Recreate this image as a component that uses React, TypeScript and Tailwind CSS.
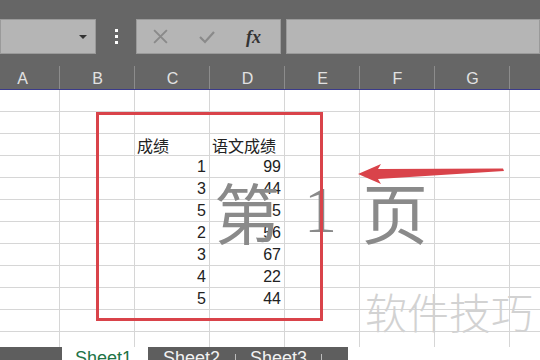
import React from "react";

const cols = ["A", "B", "C", "D", "E", "F", "G", "H"];
const data: [string, string][] = [
  ["1", "99"],
  ["3", "44"],
  ["5", "5"],
  ["2", "56"],
  ["3", "67"],
  ["4", "22"],
  ["5", "44"],
];

const sans = { fontFamily: '"Liberation Sans", "Noto Sans CJK SC", sans-serif' };
const cjk = { fontFamily: '"Noto Sans CJK SC", "Liberation Sans", sans-serif' };

function cellContent(r: number, c: number) {
  if (r === 2 && c === 2) return <span className="pl-[2px]" style={cjk}>成绩</span>;
  if (r === 2 && c === 3) return <span className="pl-[2px]" style={cjk}>语文成绩</span>;
  if (r >= 3 && r <= 9 && (c === 2 || c === 3)) {
    const v = data[r - 3][c - 2];
    return <span className="ml-auto pr-[3px]">{v}</span>;
  }
  return null;
}

export default function App() {
  return (
    <div className="relative w-[540px] h-[360px] overflow-hidden bg-white" style={sans}>
      {/* toolbar */}
      <div className="h-[64px] bg-[#666666] pt-[19px] flex items-start">
        <div className="w-[96px] h-[35px] bg-[#b5b5b5] border border-[#9a9a9a] flex items-center justify-end pr-[8px]">
          <div className="w-0 h-0 border-l-[4px] border-r-[4px] border-t-[4px] border-l-transparent border-r-transparent border-t-[#333333]" />
        </div>
        <div className="w-[40px] h-[35px] flex flex-col items-center justify-center gap-[3px]">
          <div className="w-[3px] h-[3px] bg-white" />
          <div className="w-[3px] h-[3px] bg-white" />
          <div className="w-[3px] h-[3px] bg-white" />
        </div>
        <div className="w-[145px] h-[35px] bg-[#b5b5b5] border border-[#9a9a9a] flex items-center">
          <svg width="17" height="17" viewBox="0 0 16 16" className="ml-[15px]">
            <path d="M2 2 L14 14 M14 2 L2 14" stroke="#8a8a8a" strokeWidth="1.8" fill="none" />
          </svg>
          <svg width="18" height="16" viewBox="0 0 18 16" className="ml-[29px]">
            <path d="M2 8 L7 13 L16 3" stroke="#8a8a8a" strokeWidth="2.2" fill="none" />
          </svg>
          <span
            className="ml-[30px] text-[18px] italic font-bold text-[#333333] leading-none"
            style={{ fontFamily: '"Liberation Serif", serif' }}
          >
            fx
          </span>
        </div>
        <div className="ml-[5px] flex-1 h-[35px] bg-[#b5b5b5] border border-[#9a9a9a]" />
      </div>

      {/* column header */}
      <div className="h-[26px] bg-[#666666] border-b border-[#3b3b8a] flex ml-[-15px]">
        {cols.map((c) => (
          <div key={c} className="w-[75px] shrink-0 h-full pt-[5px] relative flex items-center justify-center text-[16px] text-[#e2e2e2]">
            {c}
            <div className="absolute right-0 top-[2px] bottom-0 w-px bg-[#8c8c8c]" />
          </div>
        ))}
      </div>

      {/* grid */}
      <div className="h-[257px] overflow-hidden">
        <div className="flex flex-col ml-[-15px]">
          {Array.from({ length: 12 }).map((_, r) => (
            <div key={r} className="flex">
              {cols.map((c, ci) => (
                <div
                  key={c}
                  className="w-[75px] h-[22px] shrink-0 border-r border-b border-[#d6d6d6] flex items-center text-[16px] text-[#222222] leading-none"
                >
                  {cellContent(r, ci)}
                </div>
              ))}
            </div>
          ))}
        </div>
      </div>

      {/* sheet tabs */}
      <div className="h-[13px] flex overflow-hidden text-[18px] leading-[18px]">
        <div className="w-[62px] bg-[#5e5e5e]" />
        <div className="w-[86px] bg-white text-[#217346] pl-[13px] pt-[2px]">Sheet1</div>
        <div className="w-[200px] bg-[#5e5e5e] flex text-[#f2f2f2] pt-[2px]">
          <div className="w-[88px] pl-[15px] relative">
            Sheet2
            <div className="absolute right-0 top-[5px] w-px h-[10px] bg-[#bdbdbd]" />
          </div>
          <div className="w-[86px] pl-[14px] relative">
            Sheet3
            <div className="absolute right-0 top-[5px] w-px h-[10px] bg-[#bdbdbd]" />
          </div>
        </div>
        <div className="flex-1 bg-white" />
      </div>

      {/* page watermark text */}
      <div className="absolute left-[214px] top-[177px] flex items-start text-[66px] leading-none text-[#8a8a8a]">
        <span style={cjk}>第</span>
        <span className="ml-[24px]" style={{ fontFamily: '"Liberation Serif", serif' }}>1</span>
        <span className="ml-[25px]" style={cjk}>页</span>
      </div>

      {/* red frame */}
      <div className="absolute left-[96px] top-[112px] w-[227px] h-[209px] border-[3px] border-[#d9434a]" />

      {/* arrow */}
      <svg className="absolute left-0 top-0" width="540" height="360" viewBox="0 0 540 360">
        <polygon points="358,174 381,164 378,169 503,168.5 504,171 378,179 381,184" fill="#d9434a" />
      </svg>

      {/* site watermark */}
      <div className="absolute left-[365px] top-[290px] text-[42px] leading-none text-[#d2d2d2] font-light" style={cjk}>
        软件技巧
      </div>
    </div>
  );
}
